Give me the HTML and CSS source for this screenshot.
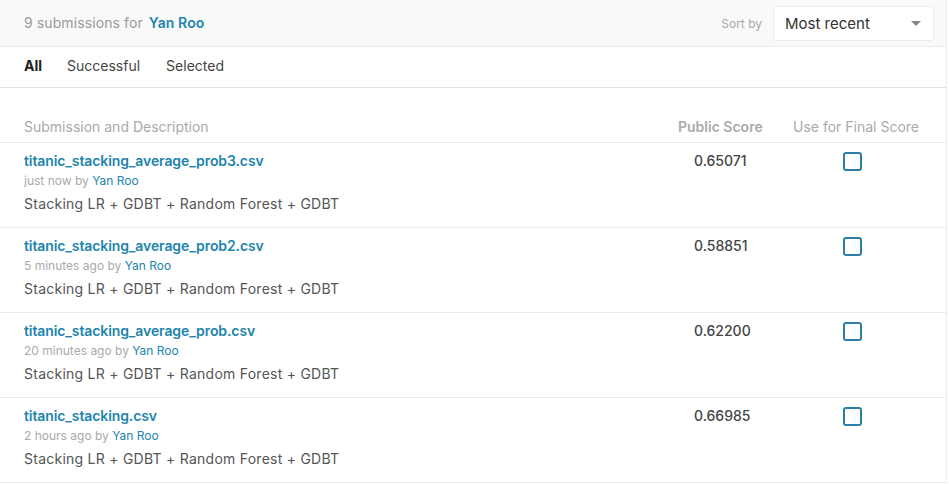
FILE: index.html
```html
<!DOCTYPE html>
<html>
<head>
<meta charset="utf-8">
<link rel="stylesheet" href="styles.css">
</head>
<body>
<div class="panel">
  <div class="topbar">
    <div class="count">9 submissions for <a class="user-link">Yan Roo</a></div>
    <div class="sort">
      <span class="sort-label">Sort by</span>
      <div class="select">
        <span>Most recent</span>
        <span class="caret"></span>
      </div>
    </div>
  </div>
  <div class="tabs">
    <span class="tab active">All</span>
    <span class="tab">Successful</span>
    <span class="tab">Selected</span>
  </div>
  <div class="table">
    <div class="row head">
      <div class="c-desc">Submission and Description</div>
      <div class="c-score">Public Score</div>
      <div class="c-final">Use for Final Score</div>
    </div>
    <div class="row sub">
      <div class="c-desc">
        <div class="fname">titanic_stacking_average_prob3.csv</div>
        <div class="meta">just now by <a class="user-link">Yan Roo</a></div>
        <div class="desc">Stacking LR + GDBT + Random Forest + GDBT</div>
      </div>
      <div class="c-score score">0.65071</div>
      <div class="c-final"><span class="check"></span></div>
    </div>
    <div class="row sub">
      <div class="c-desc">
        <div class="fname">titanic_stacking_average_prob2.csv</div>
        <div class="meta">5 minutes ago by <a class="user-link">Yan Roo</a></div>
        <div class="desc">Stacking LR + GDBT + Random Forest + GDBT</div>
      </div>
      <div class="c-score score">0.58851</div>
      <div class="c-final"><span class="check"></span></div>
    </div>
    <div class="row sub">
      <div class="c-desc">
        <div class="fname">titanic_stacking_average_prob.csv</div>
        <div class="meta">20 minutes ago by <a class="user-link">Yan Roo</a></div>
        <div class="desc">Stacking LR + GDBT + Random Forest + GDBT</div>
      </div>
      <div class="c-score score">0.62200</div>
      <div class="c-final"><span class="check"></span></div>
    </div>
    <div class="row sub">
      <div class="c-desc">
        <div class="fname">titanic_stacking.csv</div>
        <div class="meta">2 hours ago by <a class="user-link">Yan Roo</a></div>
        <div class="desc">Stacking LR + GDBT + Random Forest + GDBT</div>
      </div>
      <div class="c-score score">0.66985</div>
      <div class="c-final"><span class="check"></span></div>
    </div>
  </div>
</div>
</body>
</html>
```
FILE: styles.css
```css
* { box-sizing: border-box; }
html, body { margin: 0; padding: 0; background: #fff; }
body {
  font-family: Inter, "Liberation Sans", Arial, sans-serif;
  color: #333;
  width: 949px;
}
.panel {
  width: 947px;
  border-right: 1px solid #ececec;
}
.topbar {
  height: 47px;
  background: #f9f9f9;
  border-bottom: 1px solid #ebebeb;
  display: flex;
  align-items: center;
  justify-content: space-between;
  padding: 0 12px 0 24px;
}
.count {
  font-size: 14px;
  color: #999;
  padding-bottom: 2px;
  letter-spacing: 0.1px;
}
.user-link {
  color: #1e8ab6;
}
.count .user-link { font-weight: 600; color: #2184ad; margin-left: 2px; }
.sort { display: flex; align-items: center; gap: 11px; }
.sort-label { font-size: 12px; color: #aaa; }
.select {
  width: 161px;
  height: 35px;
  background: #fff;
  border: 1px solid #ececec;
  border-radius: 3px;
  display: flex;
  align-items: center;
  justify-content: space-between;
  padding: 0 12px 0 11px;
  font-size: 15px;
  color: #333;
  margin-top: 1px;
}
.caret {
  width: 0; height: 0;
  border-left: 5px solid transparent;
  border-right: 5px solid transparent;
  border-top: 5px solid #888;
}
.tabs {
  height: 41px;
  border-bottom: 1px solid #e2e2e2;
  display: flex;
  align-items: center;
  gap: 26px;
  padding: 0 24px 3px;
  font-size: 14px;
  color: #444;
}
.tab.active { font-weight: 700; color: #222; margin-right: -1px; }
.table { padding-top: 22px; }
.row {
  display: flex;
  border-bottom: 1px solid #ebebeb;
}
.c-desc { flex: 1; padding-left: 24px; }
.c-score { width: 102px; padding-left: 16px; }
.c-final { width: 166px; padding-left: 63px; }
.row.head {
  height: 33px;
  font-size: 14px;
  color: #aaa;
  padding-top: 8px;
}
.row.head .c-score { font-weight: 600; padding-left: 0; }
.row.head .c-final { padding-left: 13px; }
.row.sub { height: 85px; padding-top: 9px; }
.fname { font-size: 14px; font-weight: 600; color: #2184ad; line-height: 18px; letter-spacing: -0.1px; }
.meta { font-size: 12px; color: #aaa; line-height: 16px; margin-top: 3px; }
.meta .user-link { color: #2184ad; }
.desc { font-size: 14px; color: #555; line-height: 18px; margin-top: 6px; letter-spacing: 0.25px; }
.score { font-size: 14px; color: #444; line-height: 18px; font-weight: 500; }
.c-final .check {
  display: inline-block;
  width: 19px; height: 19px;
  border: 2px solid #2c80a8;
  border-radius: 3px;
}
```
